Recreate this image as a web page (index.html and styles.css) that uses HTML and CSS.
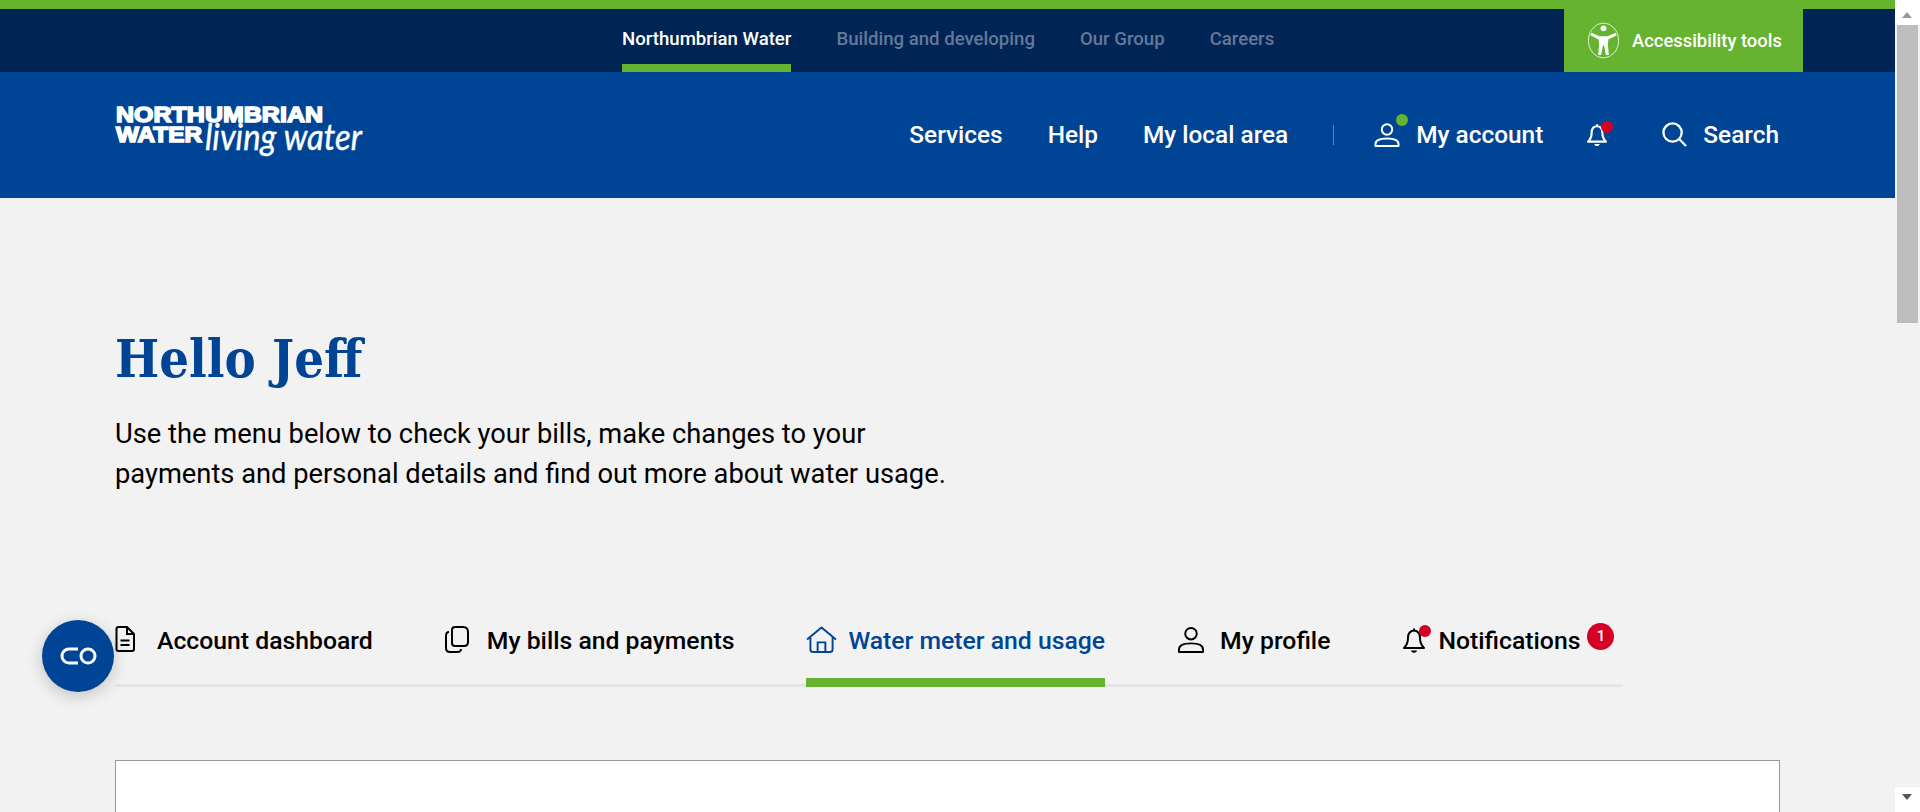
FILE: index.html
```html
<!DOCTYPE html>
<html lang="en">

<head>
    <meta charset="utf-8">
    <title>Hello Jeff - Northumbrian Water</title>
    <meta name="viewport" content="width=device-width, initial-scale=1.0">
    <link rel="stylesheet" href="styles.css">
</head>

<body>
    <div class="page">
        <div class="top-strip"></div>

        <div class="group-bar">
            <nav class="group-nav">
                <a class="group-link active" href="#">Northumbrian Water</a>
                <a class="group-link" href="#">Building and developing</a>
                <a class="group-link" href="#">Our Group</a>
                <a class="group-link" href="#">Careers</a>
            </nav>
            <a class="access-btn" href="#">
                <svg class="access-icon" viewBox="0 0 34 38" width="33" height="37">
                    <ellipse cx="17" cy="19" rx="15.5" ry="18" fill="none" stroke="#fff" stroke-width="0.8" />
                    <circle cx="17" cy="6.5" r="3" fill="#fff" />
                    <path d="M4.5 11 L13 14.5 H21 L29.5 11 L30.5 13.5 L22 18 L21.5 23 L22.5 34 H19.5 L17.5 24 H16.5 L14.5 34 H11.5 L12.5 23 L12 18 L3.5 13.5 Z" fill="#fff" />
                </svg>
                <span>Accessibility tools</span>
            </a>
        </div>

        <header class="main-bar">
            <a class="logo" href="#" aria-label="Northumbrian Water living water">
                <svg viewBox="0 0 250 66" width="250" height="66">
                    <text class="logo-name" x="1" y="22" textLength="207" lengthAdjust="spacingAndGlyphs">NORTHUMBRIAN</text>
                    <text class="logo-name" x="1" y="42" textLength="86" lengthAdjust="spacingAndGlyphs">WATER</text>
                    <text class="logo-script" x="90" y="50" textLength="157" lengthAdjust="spacingAndGlyphs">living water</text>
                </svg>
            </a>
            <nav class="main-nav">
                <a class="main-link" href="#">Services</a>
                <a class="main-link" href="#">Help</a>
                <a class="main-link" href="#">My local area</a>
                <span class="nav-divider"></span>
                <a class="main-link account-link" href="#">
                    <span class="icon-wrap">
                        <svg viewBox="0 0 26 24" width="26" height="24" fill="none" stroke="#fff" stroke-width="2">
                            <circle cx="13" cy="6.500" r="5.200" />
                            <path d="M1.500 23 V21 C1.500 17.500 6 15.500 13 15.500 C20 15.500 24.500 17.500 24.500 21 V23 Z" stroke-linejoin="round" />
                        </svg>
                        <span class="dot dot-green"></span>
                    </span>
                    My account
                </a>
                <a class="main-link bell-link" href="#">
                    <span class="icon-wrap">
                        <svg viewBox="0 0 24 28" width="22" height="25" fill="none" stroke="#fff" stroke-width="2.400">
                            <path d="M12 2.500 V4.500 C7 5 6 8.500 6 12 C6 16.500 5 19 2 22 H22 C19 19 18 16.500 18 12 C18 8.500 17 5 12 4.500" stroke-linejoin="round" />
                            <path d="M9 24.500 C9.500 27.500 14.500 27.500 15 24.500 Z" fill="#fff" stroke="none" />
                        </svg>
                        <span class="dot dot-red"></span>
                    </span>
                </a>
                <a class="main-link search-link" href="#">
                    <svg viewBox="0 0 26 26" width="25" height="25" fill="none" stroke="#fff" stroke-width="2.400">
                        <circle cx="11" cy="11" r="9.500" />
                        <path d="M18 18 L25 25" />
                    </svg>
                    Search
                </a>
            </nav>
        </header>

        <main class="content">
            <h1>Hello Jeff</h1>
            <p class="intro">Use the menu below to check your bills, make changes to your payments and personal details and find out more about water usage.</p>

            <nav class="tabs">
                <a class="tab tab-doc" href="#">
                    <svg viewBox="0 0 20 26" width="20" height="26" fill="none" stroke="currentColor" stroke-width="2">
                        <path d="M1.500 3 Q1.500 1 3.500 1 H12 L19 8 V23 Q19 25 17 25 H3.500 Q1.500 25 1.500 23 Z" stroke-linejoin="round" />
                        <path d="M12 1 V8 H19 M5.500 14.500 H14.500 M5.500 19 H14.500" />
                    </svg>
                    Account dashboard
                </a>
                <a class="tab tab-copy" href="#">
                    <svg viewBox="0 0 24 27" width="24" height="27" fill="none" stroke="currentColor" stroke-width="2">
                        <path d="M7 4 Q7 1 10 1 H18 Q23 1 23 6 V16 Q23 20 19 20 H10 Q7 20 7 17 Z" />
                        <path d="M4 6 Q1 6 1 10 V22 Q1 26 5 26 H12 Q16 26 16 23" />
                    </svg>
                    My bills and payments
                </a>
                <a class="tab tab-home active" href="#">
                    <svg viewBox="0 0 32 28" width="31" height="27" fill="none" stroke="currentColor" stroke-width="2">
                        <path d="M1 14 L16 1.500 L31 14" stroke-linejoin="round" />
                        <path d="M4.500 12 V24 Q4.500 27 7.500 27 H24.500 Q27.500 27 27.500 24 V12" />
                        <path d="M12 27 V17 H20 V27" />
                    </svg>
                    Water meter and usage
                </a>
                <a class="tab tab-user" href="#">
                    <svg viewBox="0 0 28 28" width="28" height="27" fill="none" stroke="currentColor" stroke-width="2">
                        <circle cx="14" cy="8" r="6" />
                        <path d="M1.500 27 V24.500 C1.500 20.500 6 18 14 18 C22 18 26.500 20.500 26.500 24.500 V27 Z" stroke-linejoin="round" />
                    </svg>
                    My profile
                </a>
                <a class="tab tab-notifications" href="#">
                    <span class="icon-wrap">
                        <svg viewBox="0 0 24 28" width="24" height="28" fill="none" stroke="currentColor" stroke-width="2">
                            <path d="M12 2.500 V4.500 C7 5 6 8.500 6 12 C6 16.500 5 19 2 22 H22 C19 19 18 16.500 18 12 C18 8.500 17 5 12 4.500" stroke-linejoin="round" />
                            <path d="M9 24.500 C9.500 27.500 14.500 27.500 15 24.500 Z" fill="currentColor" stroke="none" />
                        </svg>
                        <span class="dot dot-red"></span>
                    </span>
                    Notifications
                    <span class="count">1</span>
                </a>
            </nav>

            <section class="panel"></section>
        </main>

        <button class="fab" aria-label="Toggle">
            <svg viewBox="0 0 37 18" width="37" height="18" fill="none" stroke="#fff" stroke-width="3">
                <path d="M18 2 H9 A7 7 0 0 0 9 16 H18" />
                <circle cx="28" cy="9" r="7" />
            </svg>
        </button>
    </div>

    <div class="scrollbar">
        <div class="scroll-arrow arrow-up"></div>
        <div class="scroll-track"><div class="scroll-thumb"></div></div>
        <div class="scroll-arrow arrow-down"></div>
    </div>
</body>

</html>
```

FILE: styles.css
```css
:root {
    --green: #65b32e;
    --navy: #002554;
    --blue: #004595;
    --bg-color: #f2f2f2;
    --red: #d50025;
}

* {
    margin: 0;
    padding: 0;
    box-sizing: border-box;
}

html,
body {
    height: 812px;
    overflow: hidden;
}

body {
    font-family: Roboto, "Liberation Sans", sans-serif;
    background-color: var(--bg-color);
    color: #000;
    display: flex;
}

a {
    color: inherit;
    text-decoration: none;
}

.page {
    position: relative;
    flex-grow: 1;
    min-width: 0;
}

.top-strip {
    height: 9px;
    background: var(--green);
}

/* group bar */

.group-bar {
    height: 63px;
    background: var(--navy);
    display: flex;
    padding-left: 622px;
}

.group-nav {
    display: flex;
    gap: 45px;
    width: 942px;
}

.group-link {
    font-size: 18.600px;
    font-weight: 500;
    color: #64789a;
    padding-top: 19px;
    white-space: nowrap;
}

.group-link.active {
    color: #fff;
    border-bottom: 8px solid var(--green);
}

.access-btn {
    width: 239px;
    background: var(--green);
    color: #fff;
    font-size: 18.400px;
    font-weight: 500;
    display: flex;
    align-items: center;
    gap: 12px;
    padding-left: 23px;
}

/* main bar */

.main-bar {
    height: 126px;
    background: var(--blue);
    color: #fff;
    display: flex;
    align-items: center;
    justify-content: space-between;
    padding: 0 116px 0 115px;
}

.logo {
    display: block;
    height: 66px;
    margin-top: -4px;
}

.logo svg {
    overflow: visible;
}

.logo-name {
    font-family: "Liberation Sans", sans-serif;
    font-weight: 700;
    font-size: 22px;
    fill: #fff;
    stroke: #fff;
    stroke-width: 1.5px;
}

.logo-script {
    font-family: Lato, sans-serif;
    font-style: italic;
    font-size: 36px;
    fill: #fff;
    stroke: #fff;
    stroke-width: 0.4px;
}

.main-nav {
    display: flex;
    align-items: center;
    margin-top: -1px;
    font-size: 24.400px;
    font-weight: 500;
}

.main-link {
    display: flex;
    align-items: center;
    margin-left: 45px;
    white-space: nowrap;
}

.nav-divider {
    width: 1px;
    height: 20px;
    background: #5b82b8;
    margin-left: 45px;
}

.account-link {
    gap: 16px;
    margin-left: 40px;
}

.bell-link {
    margin-left: 43px;
}

.search-link {
    gap: 16px;
    margin-left: 54px;
}

.icon-wrap {
    position: relative;
    display: flex;
}

.dot {
    position: absolute;
    width: 12px;
    height: 12px;
    border-radius: 50%;
}

.dot-green {
    background: var(--green);
    top: -9px;
    right: -8px;
}

.dot-red {
    background: var(--red);
    top: -1px;
    right: -5px;
}

/* content */

.content {
    padding: 126px 115px 0 115px;
}

h1 {
    font-family: "DejaVu Serif Condensed", "DejaVu Serif", serif;
    font-size: 52px;
    font-weight: 700;
    line-height: 70px;
    color: var(--blue);
}

.intro {
    width: 840px;
    font-size: 27.300px;
    line-height: 40px;
    margin-top: 20px;
}

.tabs {
    display: flex;
    width: 1508px;
    height: 88px;
    margin-top: 105px;
    border-bottom: 3px solid #e5e5e5;
    gap: 72px;
    font-size: 24.750px;
    font-weight: 500;
}

.tab {
    display: flex;
    align-items: flex-start;
    white-space: nowrap;
    height: 88px;
    padding-top: 27px;
}

.tab svg {
    flex-shrink: 0;
}

.tab-doc svg {
    margin-right: 22px;
}

.tab-copy svg {
    margin-right: 18px;
}

.tab-home svg {
    margin-right: 11px;
}

.tab-user svg {
    margin-right: 15px;
}

.tab.active {
    color: var(--blue);
    border-bottom: 9px solid var(--green);
}

.tab-notifications .icon-wrap {
    margin-right: 12px;
}

.count {
    width: 27px;
    height: 27px;
    border-radius: 50%;
    background: var(--red);
    color: #fff;
    font-size: 15px;
    font-weight: 500;
    text-align: center;
    line-height: 27px;
    margin-left: 7px;
    margin-top: -3px;
}

.panel {
    height: 200px;
    margin-top: 73px;
    background: #fff;
    border: 1px solid #999;
}

.fab {
    position: absolute;
    left: 42px;
    top: 620px;
    width: 72px;
    height: 72px;
    border: none;
    border-radius: 50%;
    background: var(--blue);
    box-shadow: 0 4px 16px rgba(0, 0, 0, 0.2);
    display: flex;
    align-items: center;
    justify-content: center;
}

/* scrollbar */

.scrollbar {
    width: 25px;
    flex-shrink: 0;
    background: #fff;
    display: flex;
    flex-direction: column;
    align-items: center;
}

.scroll-arrow {
    height: 25px;
    width: 100%;
    position: relative;
}

.scroll-arrow::after {
    content: "";
    position: absolute;
    left: 7px;
    border-left: 5px solid transparent;
    border-right: 5px solid transparent;
}

.arrow-up::after {
    top: 12px;
    border-bottom: 6px solid #999;
}

.arrow-down::after {
    top: 7px;
    border-top: 6px solid #555;
}

.scroll-track {
    flex-grow: 1;
    width: 100%;
    padding: 0 2px;
    background: var(--bg-color);
}

.scroll-thumb {
    height: 298px;
    background: #bdbdbd;
}
```
